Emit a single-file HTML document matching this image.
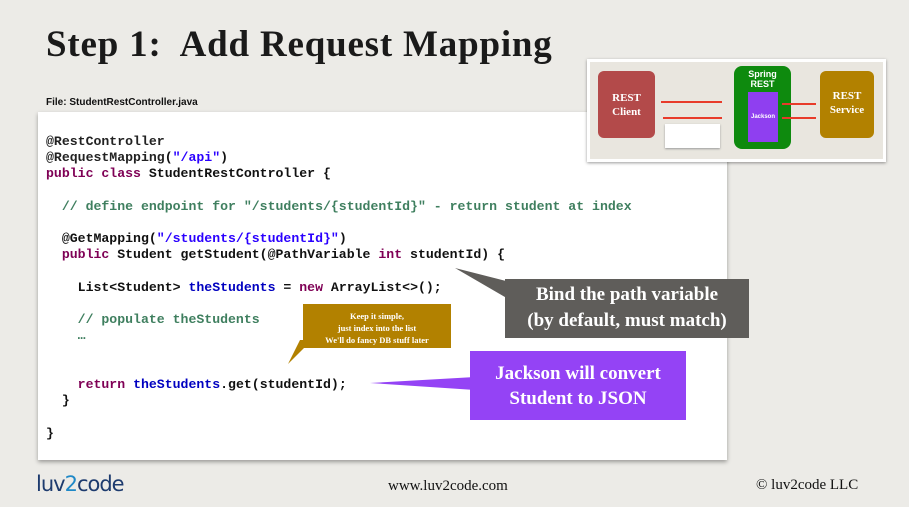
<!DOCTYPE html>
<html><head><meta charset="utf-8"><style>
body{margin:0;width:909px;height:507px;overflow:hidden;background:#ecebe7;font-family:"Liberation Serif",serif;position:relative}
.abs{position:absolute}
h1{position:absolute;left:46px;top:23px;margin:0;font-size:37px;font-weight:bold;color:#1a1a1a;letter-spacing:0.8px}
.file{left:46px;top:97px;font:bold 10px "Liberation Sans",sans-serif;color:#111}
.panel{left:38px;top:112px;width:689px;height:348px;background:#fff;box-shadow:0 2px 4px rgba(0,0,0,.35)}
pre{position:absolute;left:46px;top:134px;margin:0;font:bold 13.2px/16.2px "Liberation Mono",monospace;color:#111}
.k{color:#7f0055}.s{color:#2a00ff}.c{color:#3f7f5f}.v{color:#0000c0}
.box{color:#fff;font-weight:bold;text-align:center}
</style></head><body>
<h1>Step 1:&nbsp; Add Request Mapping</h1>
<div class="abs file">File: StudentRestController.java</div>
<div class="abs panel"></div>
<pre><span style="color:#222">@RestController</span>
<span style="color:#222">@RequestMapping</span>(<span class="s">"/api"</span>)
<span class="k">public class</span> StudentRestController {

  <span class="c">// define endpoint for "/students/{studentId}" - return student at index</span>

  @GetMapping(<span class="s">"/students/{studentId}"</span>)
  <span class="k">public</span> Student getStudent(@PathVariable <span class="k">int</span> studentId) {

    List&lt;Student&gt; <span class="v">theStudents</span> = <span class="k">new</span> ArrayList&lt;&gt;();

    <span class="c">// populate theStudents</span>
    <span class="c">…</span>


    <span class="k">return</span> <span class="v">theStudents</span>.get(studentId);
  }

}</pre>
<div class="abs" style="left:587px;top:59px;width:293px;height:97px;background:#e9e6df;border:3px solid #fff;box-shadow:0 1px 3px rgba(0,0,0,.4)"></div>
<div class="abs box" style="left:598px;top:71px;width:57px;height:67px;background:#b34a4a;border-radius:6px;font-size:11px;line-height:14px;padding-top:20px;box-sizing:border-box">REST<br>Client</div>
<div class="abs box" style="left:734px;top:66px;width:57px;height:83px;background:#0e8a0e;border-radius:8px;font:bold 9px/10px 'Liberation Sans',sans-serif;padding-top:3px;box-sizing:border-box">Spring<br>REST</div>
<div class="abs box" style="left:748px;top:92px;width:30px;height:50px;background:#8f3ff0;font:bold 6px 'Liberation Sans',sans-serif;line-height:50px">Jackson</div>
<div class="abs box" style="left:820px;top:71px;width:54px;height:67px;background:#b28100;border-radius:6px;font-size:11px;line-height:14px;padding-top:18px;box-sizing:border-box">REST<br>Service</div>
<div class="abs" style="left:661px;top:101px;width:61px;height:2px;background:#e83b2a"></div>
<div class="abs" style="left:663px;top:117px;width:59px;height:2px;background:#e83b2a"></div>
<div class="abs" style="left:782px;top:103px;width:34px;height:2px;background:#e83b2a"></div>
<div class="abs" style="left:782px;top:117px;width:34px;height:2px;background:#e83b2a"></div>
<div class="abs" style="left:665px;top:124px;width:55px;height:24px;background:#fff;box-shadow:0 1px 2px #999"></div>
<svg class="abs" style="left:0;top:0" width="909" height="507">
<polygon points="455,268 510,282 510,300" fill="#5f5d5a"/>
<polygon points="288,364 300,340 312,340" fill="#b28100"/>
<polygon points="370,383 475,377 475,390" fill="#9443f5"/>
</svg>
<div class="abs box" style="left:505px;top:279px;width:244px;height:59px;background:#5f5d5a;font-size:19px;line-height:26px;padding-top:3px;box-sizing:border-box">Bind the path variable<br>(by default, must match)</div>
<div class="abs box" style="left:303px;top:304px;width:148px;height:44px;background:#b28100;font-size:8.5px;line-height:12px;padding-top:6px;box-sizing:border-box">Keep it simple,<br>just index into the list<br>We'll do fancy DB stuff later</div>
<div class="abs box" style="left:470px;top:351px;width:216px;height:69px;background:#9443f5;font-size:19px;line-height:25px;padding-top:10px;box-sizing:border-box">Jackson will convert<br>Student to JSON</div>
<div class="abs" style="left:36px;top:472px;font:21px 'DejaVu Sans',sans-serif;color:#1d3b6e;letter-spacing:-1px">luv<span style="color:#1e88c7">2</span>code</div>
<div class="abs" style="left:388px;top:478px;font-size:15px;color:#111">www.luv2code.com</div>
<div class="abs" style="left:756px;top:477px;font-size:15px;color:#111">© luv2code LLC</div>
</body></html>
